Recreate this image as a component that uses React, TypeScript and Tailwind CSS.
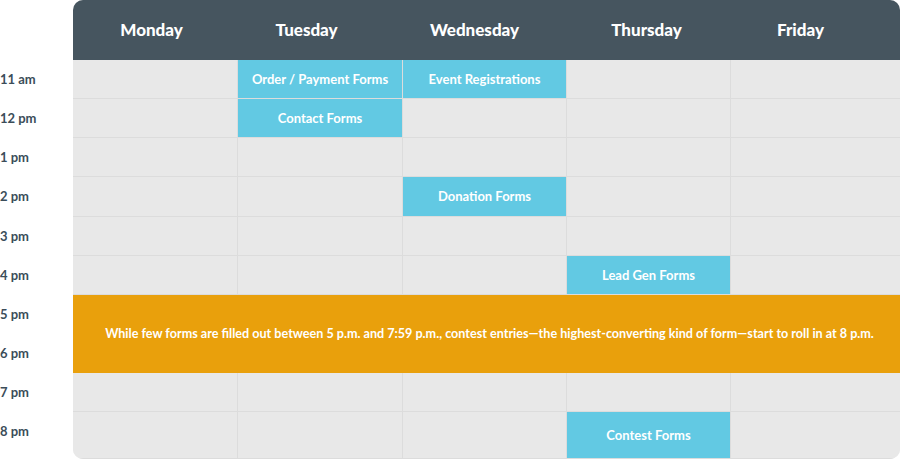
const days = [
  { name: "Monday", pad: "pr-[8px]" },
  { name: "Tuesday", pad: "pr-[28px]" },
  { name: "Wednesday", pad: "pr-[21px]" },
  { name: "Thursday", pad: "pr-[5px]" },
  { name: "Friday", pad: "pr-[30px]" },
];
const times = ["11 am", "12 pm", "1 pm", "2 pm", "3 pm", "4 pm", "5 pm", "6 pm", "7 pm", "8 pm"];
const rowHeights = ["h-[39px]", "h-[39px]", "h-[39px]", "h-[40px]", "h-[39px]", "h-[39px]", "h-[39px]", "h-[39px]", "h-[39px]", "h-[39px]"];

// row index -> { day index: label }
const events: Record<number, Record<number, string>> = {
  0: { 1: "Order / Payment Forms", 2: "Event Registrations" },
  1: { 1: "Contact Forms" },
  3: { 2: "Donation Forms" },
  5: { 3: "Lead Gen Forms" },
  9: { 3: "Contest Forms" },
};

const Cell = ({ label, last }: { label?: string; last: boolean }) => (
  <div
    className={`flex items-center justify-center pt-px border-b border-[#dcdcdc] ${last ? "" : "border-r"} ${
      label ? "bg-[#62c9e3] border-[#cfe9f0]" : "bg-[#e8e8e8]"
    }`}
  >
    {label && <span className="text-white text-[13px] font-bold">{label}</span>}
  </div>
);

export default function App() {
  return (
    <div className="w-[900px] h-[459px] bg-white flex font-['Lato',sans-serif] overflow-hidden">
      {/* Time labels */}
      <div className="w-[73px] pt-[60px] flex flex-col">
        {times.map((t, i) => (
          <div key={t} className={`${rowHeights[i]} flex items-center text-[13px] font-bold text-[#3b4d59]`}>
            {t}
          </div>
        ))}
      </div>

      {/* Schedule */}
      <div className="flex-1 flex flex-col rounded-[10px] overflow-hidden bg-[#e8e8e8]">
        <div className="h-[60px] shrink-0 grid grid-cols-[165px_165px_164px_164px_1fr] bg-[#46555f]">
          {days.map((d) => (
            <div key={d.name} className={`flex items-center justify-center text-white text-[17px] font-black ${d.pad}`}>
              {d.name}
            </div>
          ))}
        </div>

        <div className="flex-1 grid grid-cols-[165px_165px_164px_164px_1fr] grid-rows-[39px_39px_39px_40px_39px_39px_39px_39px_39px_1fr]">
          {times.map((_, r) => {
            if (r === 7) return null;
            if (r === 6)
              return (
                <div
                  key={r}
                  className="col-span-5 row-span-2 bg-[#e9a00c] flex items-center justify-center pl-[6px] text-white text-[12.6px] font-bold"
                >
                  While few forms are filled out between 5 p.m. and 7:59 p.m., contest entries—the highest-converting kind of form—start to roll in at 8 p.m.
                </div>
              );
            return days.map((_, c) => <Cell key={`${r}-${c}`} label={events[r]?.[c]} last={c === 4} />);
          })}
        </div>
      </div>
    </div>
  );
}
